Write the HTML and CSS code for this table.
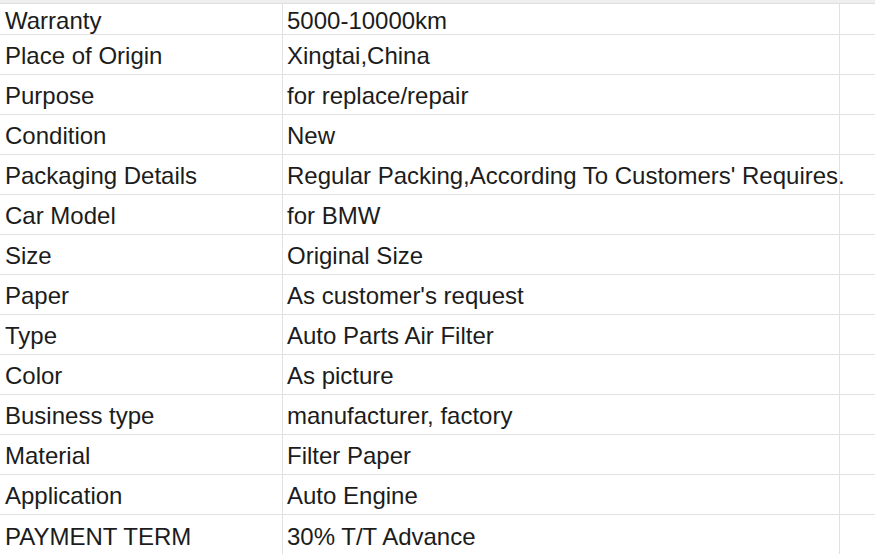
FILE: index.html
```html
<!DOCTYPE html>
<html lang="en">
<head>
<meta charset="utf-8">
<title>Product specifications</title>
<link rel="stylesheet" href="styles.css">
</head>
<body>
<div class="sheet">
  <div class="top-strip"></div>
  <div class="row first"><div class="cell">Warranty</div><div class="cell">5000-10000km</div><div class="cell"></div></div>
  <div class="row"><div class="cell">Place of Origin</div><div class="cell">Xingtai,China</div><div class="cell"></div></div>
  <div class="row"><div class="cell">Purpose</div><div class="cell">for replace/repair</div><div class="cell"></div></div>
  <div class="row"><div class="cell">Condition</div><div class="cell">New</div><div class="cell"></div></div>
  <div class="row"><div class="cell">Packaging Details</div><div class="cell">Regular Packing,According To Customers' Requires.</div><div class="cell"></div></div>
  <div class="row"><div class="cell">Car Model</div><div class="cell">for BMW</div><div class="cell"></div></div>
  <div class="row"><div class="cell">Size</div><div class="cell">Original Size</div><div class="cell"></div></div>
  <div class="row"><div class="cell">Paper</div><div class="cell">As customer's request</div><div class="cell"></div></div>
  <div class="row"><div class="cell">Type</div><div class="cell">Auto Parts Air Filter</div><div class="cell"></div></div>
  <div class="row"><div class="cell">Color</div><div class="cell">As picture</div><div class="cell"></div></div>
  <div class="row"><div class="cell">Business type</div><div class="cell">manufacturer, factory</div><div class="cell"></div></div>
  <div class="row"><div class="cell">Material</div><div class="cell">Filter Paper</div><div class="cell"></div></div>
  <div class="row"><div class="cell">Application</div><div class="cell">Auto Engine</div><div class="cell"></div></div>
  <div class="row last"><div class="cell">PAYMENT TERM</div><div class="cell">30% T/T Advance</div><div class="cell"></div></div>
</div>
</body>
</html>
```
FILE: styles.css
```css
html, body {
  margin: 0;
  padding: 0;
  background: #ffffff;
  overflow: hidden;
}
body {
  width: 875px;
  height: 554px;
  font-family: "Liberation Sans", Arial, sans-serif;
  font-size: 24px;
  color: #1c1c1c;
}
.sheet {
  display: flex;
  flex-direction: column;
}
.top-strip {
  height: 3px;
  background: #efefef;
  border-bottom: 1px solid #dedede;
}
.row {
  display: grid;
  grid-template-columns: 283px 557px 1fr;
  height: 40px;
  box-sizing: border-box;
  border-bottom: 1px solid #e1e1e1;
  flex: none;
}
.row.first {
  height: 31px;
}
.row.last {
  border-bottom: none;
}
.cell {
  box-sizing: border-box;
  border-right: 1px solid #e1e1e1;
  padding: 3px 5px 0 5px;
  display: flex;
  align-items: center;
  white-space: nowrap;
  line-height: 1;
}
.cell:nth-child(2) {
  padding-left: 4px;
}
.cell:last-child {
  border-right: none;
}
```
